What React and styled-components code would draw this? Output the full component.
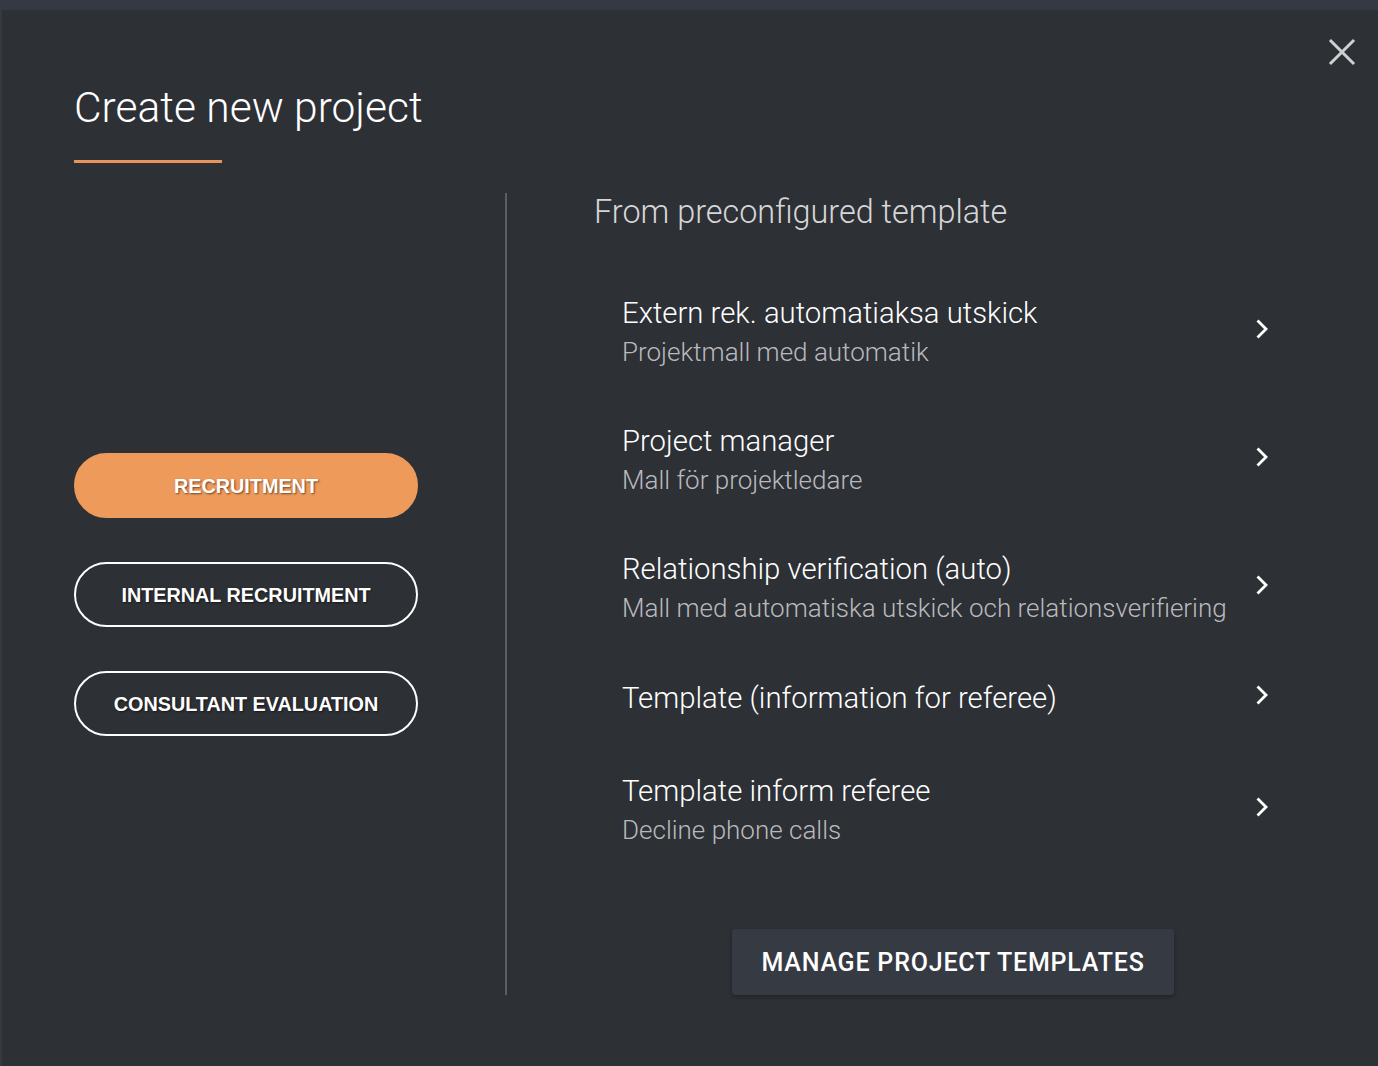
import React from 'react'
import styled, { createGlobalStyle } from 'styled-components'

const GlobalStyle = createGlobalStyle`
  html, body {
    margin: 0;
    padding: 0;
    background: #353943;
  }
  * {
    box-sizing: border-box;
  }
`

const templates = [
  { title: 'Extern rek. automatiaksa utskick', sub: 'Projektmall med automatik' },
  { title: 'Project manager', sub: 'Mall för projektledare' },
  {
    title: 'Relationship verification (auto)',
    sub: 'Mall med automatiska utskick och relationsverifiering',
  },
  { title: 'Template (information for referee)' },
  { title: 'Template inform referee', sub: 'Decline phone calls' },
]

const categories = [
  { label: 'RECRUITMENT', active: true },
  { label: 'INTERNAL RECRUITMENT' },
  { label: 'CONSULTANT EVALUATION' },
]

const Chevron = () => (
  <svg width="16" height="24" viewBox="0 0 16 24" fill="none">
    <path
      d="M4.5 4.5 L12 12 L4.5 19.5"
      stroke="#ffffff"
      strokeWidth="2.8"
      strokeLinecap="square"
    />
  </svg>
)

const CloseIcon = () => (
  <svg width="28" height="28" viewBox="0 0 28 28" fill="none">
    <path
      d="M3 3 L25 25 M25 3 L3 25"
      stroke="#cfd0d2"
      strokeWidth="3"
      strokeLinecap="square"
    />
  </svg>
)

const App = () => (
  <Page>
    <GlobalStyle />
    <Modal>
      <CloseButton aria-label="Close">
        <CloseIcon />
      </CloseButton>

      <Header>
        <Title>Create new project</Title>
        <Underline />
      </Header>

      <Body>
        <Categories>
          {categories.map(c => (
            <CategoryButton key={c.label} $active={c.active}>
              {c.label}
            </CategoryButton>
          ))}
        </Categories>

        <Divider />

        <TemplatesColumn>
          <SectionTitle>From preconfigured template</SectionTitle>
          <TemplateList>
            {templates.map(t => (
              <TemplateItem key={t.title} $single={!t.sub}>
                <TemplateText>
                  <TemplateTitle>{t.title}</TemplateTitle>
                  {t.sub && <TemplateSub>{t.sub}</TemplateSub>}
                </TemplateText>
                <ChevronBox>
                  <Chevron />
                </ChevronBox>
              </TemplateItem>
            ))}
          </TemplateList>
          <Footer>
            <ManageButton>MANAGE PROJECT TEMPLATES</ManageButton>
          </Footer>
        </TemplatesColumn>
      </Body>
    </Modal>
  </Page>
)

const Page = styled.div`
  min-height: 100vh;
  padding: 10px 0 0 2px;
  background: #353943;
  font-family: Roboto, 'Liberation Sans', sans-serif;
`

const Modal = styled.div`
  position: relative;
  min-height: 1056px;
  background: #2d3035;
  padding: 72px 0 0 72px;
`

const CloseButton = styled.button`
  position: absolute;
  top: 28px;
  right: 22px;
  background: none;
  border: none;
  padding: 0;
  cursor: pointer;
  display: flex;
`

const Header = styled.div`
  display: flex;
  flex-direction: column;
  align-items: flex-start;
`

const Title = styled.h1`
  margin: 0;
  font-size: 42.5px;
  line-height: 52px;
  font-weight: 300;
  color: #ffffff;
`

const Underline = styled.div`
  width: 148px;
  height: 3px;
  margin-top: 26px;
  background: #e8955a;
`

const Body = styled.div`
  display: flex;
  margin-top: 30px;
  height: 802px;
`

const Categories = styled.div`
  width: 431px;
  display: flex;
  flex-direction: column;
  justify-content: center;
  align-items: flex-start;
  gap: 44px;
`

const CategoryButton = styled.button`
  width: 344px;
  height: 65px;
  padding: 3px 0 0;
  border-radius: 33px;
  border: 2px solid ${p => (p.$active ? '#ee9a5a' : '#ffffff')};
  background: ${p => (p.$active ? '#ee9a5a' : 'transparent')};
  color: #ffffff;
  font-family: 'Liberation Sans', Arial, sans-serif;
  font-weight: 700;
  font-size: 19.8px;
  text-shadow: 1px 1px 2px rgba(0, 0, 0, 0.55);
  cursor: pointer;
`

const Divider = styled.div`
  width: 2px;
  background: #5b5e63;
`

const TemplatesColumn = styled.div`
  flex: 1;
  display: flex;
  flex-direction: column;
  padding: 0 66px 0 87px;
`

const SectionTitle = styled.h2`
  margin: -1px 0 0;
  font-size: 32.4px;
  line-height: 40px;
  font-weight: 300;
  color: #d6d6d8;
`

const TemplateList = styled.div`
  display: flex;
  flex-direction: column;
  margin-top: 36px;
`

const TemplateItem = styled.div`
  display: flex;
  align-items: center;
  justify-content: space-between;
  padding: ${p => (p.$single ? '26px 42px 28px 28px' : '25px 42px 25px 28px')};
  cursor: pointer;
`

const TemplateText = styled.div`
  display: flex;
  flex-direction: column;
`

const TemplateTitle = styled.div`
  font-size: 29.3px;
  line-height: 40px;
  font-weight: 300;
  color: #ffffff;
`

const TemplateSub = styled.div`
  font-size: 26px;
  line-height: 38px;
  font-weight: 300;
  color: #b9babd;
`

const ChevronBox = styled.div`
  display: flex;
  margin-top: -6px;
`

const Footer = styled.div`
  display: flex;
  justify-content: center;
  margin-top: auto;
`

const ManageButton = styled.button`
  height: 66px;
  padding: 0 29px;
  border: none;
  border-radius: 4px;
  background: #363a43;
  box-shadow: 0 2px 4px rgba(0, 0, 0, 0.3);
  color: #ffffff;
  font-family: Roboto, 'Liberation Sans', sans-serif;
  font-weight: 500;
  font-size: 25px;
  letter-spacing: 0.8px;
  cursor: pointer;
`

export default App
